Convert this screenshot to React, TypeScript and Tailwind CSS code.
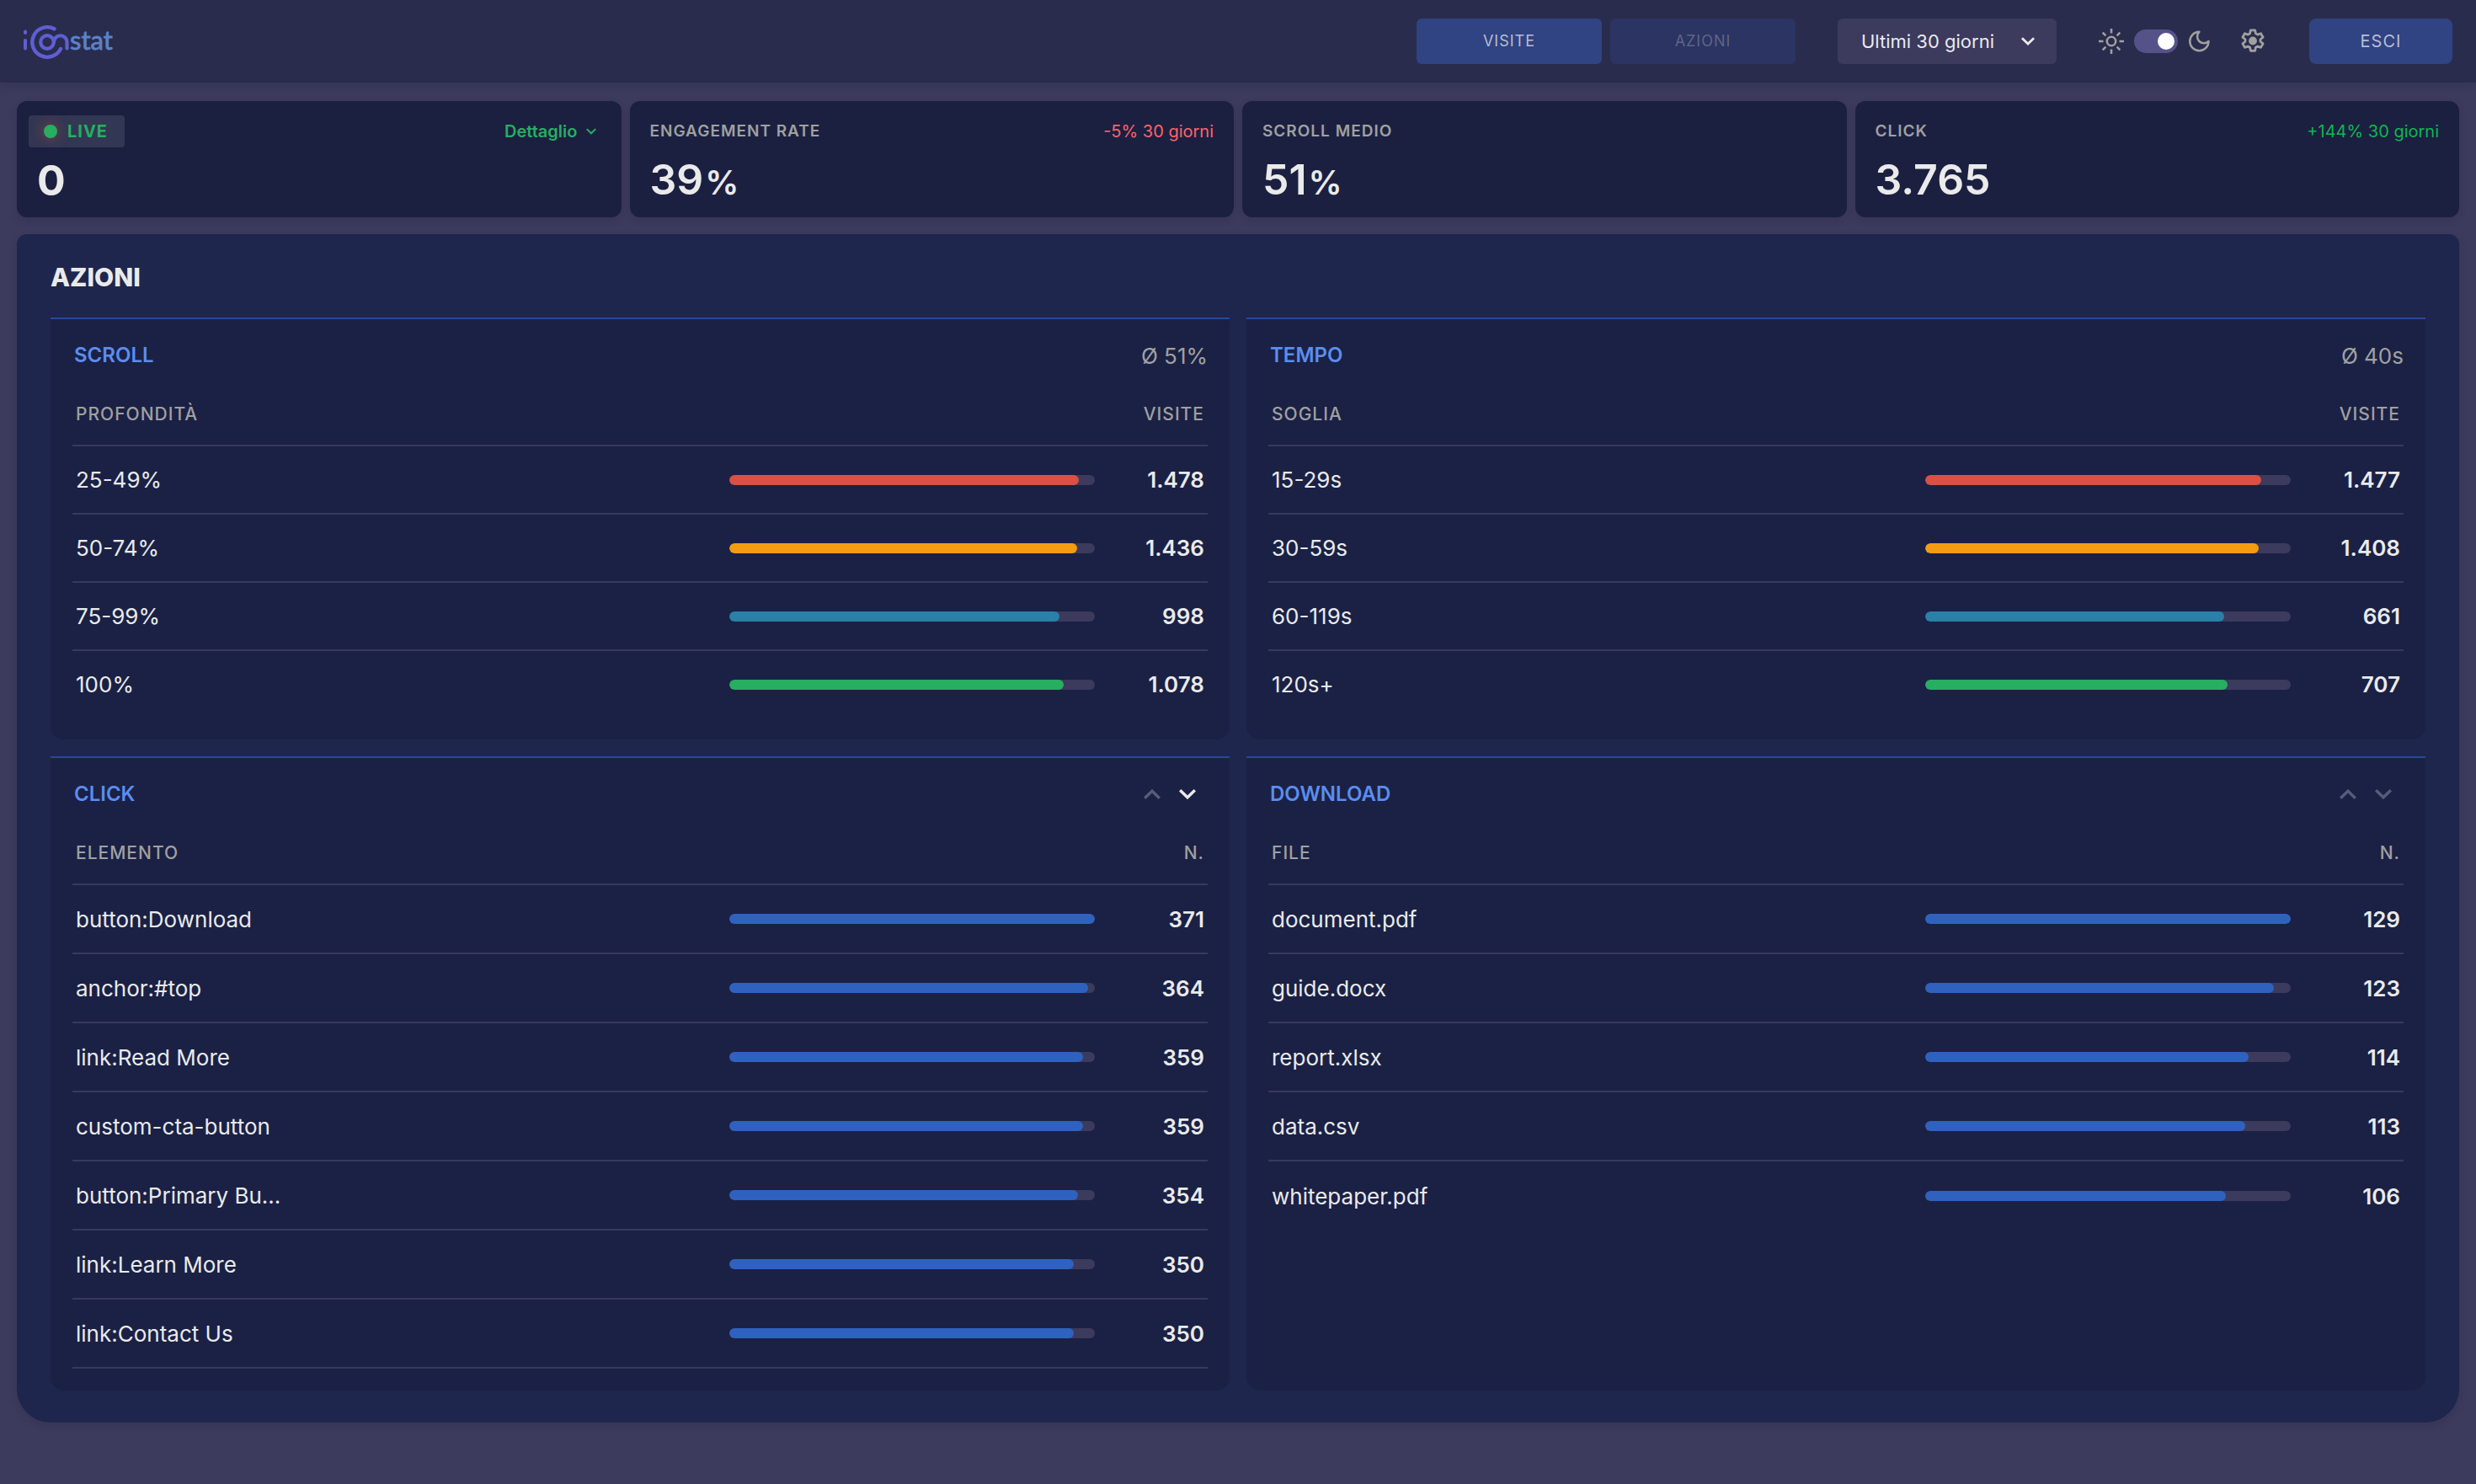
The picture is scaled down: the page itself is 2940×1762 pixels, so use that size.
import React from 'react';

type Row = {
  label: string;
  value: string;
  width: number;
  color: string;
};

const kpis = [
  { label: 'ENGAGEMENT RATE', value: '39', unit: '%', trend: '-5% 30 giorni', trendColor: 'text-[#ff6369]' },
  { label: 'SCROLL MEDIO', value: '51', unit: '%', trend: '', trendColor: '' },
  { label: 'CLICK', value: '3.765', unit: '', trend: '+144% 30 giorni', trendColor: 'text-[#12b550]' },
];

const scrollRows: Row[] = [
  { label: '25-49%', value: '1.478', width: 95.6, color: 'bg-[#db4f45]' },
  { label: '50-74%', value: '1.436', width: 95.2, color: 'bg-[#f39c12]' },
  { label: '75-99%', value: '998', width: 90.4, color: 'bg-[#2980a9]' },
  { label: '100%', value: '1.078', width: 91.5, color: 'bg-[#27ae60]' },
];

const timeRows: Row[] = [
  { label: '15-29s', value: '1.477', width: 92, color: 'bg-[#db4f45]' },
  { label: '30-59s', value: '1.408', width: 91.2, color: 'bg-[#f39c12]' },
  { label: '60-119s', value: '661', width: 81.8, color: 'bg-[#2980a9]' },
  { label: '120s+', value: '707', width: 82.7, color: 'bg-[#27ae60]' },
];

const toRows = (items: [string, number][]): Row[] =>
  items.map(([label, count]) => ({
    label,
    value: String(count),
    width: (count / items[0][1]) * 100,
    color: 'bg-[#2f62bf]',
  }));

const clickRows = toRows([
  ['button:Download', 371],
  ['anchor:#top', 364],
  ['link:Read More', 359],
  ['custom-cta-button', 359],
  ['button:Primary Bu...', 354],
  ['link:Learn More', 350],
  ['link:Contact Us', 350],
]);

const downloadRows = toRows([
  ['document.pdf', 129],
  ['guide.docx', 123],
  ['report.xlsx', 114],
  ['data.csv', 113],
  ['whitepaper.pdf', 106],
]);

const Chevron = ({ up = false, className = '' }: { up?: boolean; className?: string }) => (
  <svg viewBox="0 0 20 12" className={className} fill="none" stroke="currentColor" strokeWidth="3.4" aria-hidden="true">
    <path d={up ? 'M1.2 10.8 10 2.2l8.8 8.6' : 'M1.2 1.2 10 9.8l8.8-8.6'} />
  </svg>
);

const Logo = () => (
  <svg viewBox="0 0 108 44" className="h-11 w-27" fill="none" strokeLinecap="round" role="img" aria-label="iConstat">
    <g stroke="#5f5fd3">
      <path d="M2 10.5v1.6M2 21v9.500" strokeWidth="4" />
      <path d="M36.500 7.300A17.800 17.800 0 1 0 44 31" strokeWidth="4.400" />
      <circle cx="28" cy="23" r="7.800" strokeWidth="4.200" />
      <path d="M36 23a7.750 7.750 0 0 1 15.500 0v7.500" strokeWidth="4.200" />
    </g>
    <text
      x="55"
      y="31.500"
      fill="#5a82c8"
      stroke="#5a82c8"
      strokeWidth="0.8"
      fontFamily="Lato, sans-serif"
      fontSize="31"
    >
      stat
    </text>
  </svg>
);

const Sun = () => (
  <svg viewBox="0 0 30 30" className="size-[30px]" fill="none" stroke="currentColor" strokeWidth="2.600" aria-hidden="true">
    <circle cx="15" cy="15" r="5.200" />
    <path d="M15 0v5.500M15 24.500V30M0 15h5.500M24.500 15H30M4.700 4.700l3.700 3.700M21.600 21.600l3.700 3.700M4.700 25.300l3.700-3.700M21.600 8.400l3.700-3.700" />
  </svg>
);

const Moon = () => (
  <svg viewBox="1.200 1.500 21 21" className="size-[26px]" fill="none" stroke="currentColor" strokeWidth="2" strokeLinejoin="round" aria-hidden="true">
    <path d="M12 3a6 6 0 0 0 9 9 9 9 0 1 1-9-9Z" />
  </svg>
);

const Gear = () => (
  <svg viewBox="0 0 30 30" className="size-[30px]" fill="none" stroke="currentColor" strokeWidth="2.800" strokeLinejoin="round" aria-hidden="true">
    <path d="M12.400 1.800h5.200l.8 4 2.300 1.300 3.800-1.400 2.600 4.500-3.100 2.600v2.500l3.100 2.600-2.600 4.500-3.800-1.400-2.300 1.300-.8 4h-5.200l-.8-4-2.300-1.300-3.800 1.400-2.600-4.500 3.100-2.600v-2.500l-3.100-2.600 2.600-4.500 3.800 1.400 2.300-1.300Z" />
    <circle cx="15" cy="14.500" r="3.500" fill="currentColor" />
  </svg>
);

const Header = () => (
  <header className="flex h-[98px] items-center justify-between bg-[#2a2c4d] px-7 shadow-[0_4px_12px_rgba(0,0,0,0.08)]">
    <a href="#" className="block">
      <Logo />
    </a>
    <div className="flex items-center">
      <nav className="flex gap-2.5">
        <button className="h-[54px] w-[220px] rounded-md bg-[#304382] text-lg tracking-[1px] text-[#b9bdd3]">
          VISITE
        </button>
        <button className="h-[54px] w-[220px] rounded-md bg-[#2b3462] text-lg tracking-[1px] text-[#5f6487]" disabled>
          AZIONI
        </button>
      </nav>
      <div className="relative ml-[50px]">
        <select
          aria-label="Periodo"
          className="h-[54px] w-[260px] appearance-none rounded-md bg-[#3c3a5d] pl-7 text-[22px] text-[#eaeaea]"
        >
          <option>Ultimi 30 giorni</option>
        </select>
        <Chevron className="pointer-events-none absolute top-[22px] right-[26px] h-2.5 w-4 text-[#eaeaea]" />
      </div>
      <div className="ml-[50px] flex items-center gap-3 text-[#a0a0a0]">
        <Sun />
        <label className="relative block h-7 w-[52px]">
          <input
            type="checkbox"
            aria-label="Tema scuro"
            defaultChecked
            className="peer block h-7 w-[52px] appearance-none rounded-full bg-[#55528a]"
          />
          <span className="absolute top-1 left-1 size-5 rounded-full bg-white peer-checked:left-7" />
        </label>
        <Moon />
      </div>
      <button aria-label="Impostazioni" className="ml-9 text-[#a0a0a0]">
        <Gear />
      </button>
      <button className="ml-[52px] h-[54px] w-[170px] rounded-lg bg-[#304382] text-xl tracking-[1px] text-[#b9bdd3]">
        ESCI
      </button>
    </div>
  </header>
);

const LiveCard = () => (
  <section className="h-[138px] rounded-xl bg-[#1b2041] pt-[17px] pr-6 pl-3.5 shadow-[0_4px_12px_rgba(0,0,0,0.08)]">
    <div className="flex h-[38px] items-center justify-between">
      <div className="flex h-full w-[114px] items-center gap-3 rounded-sm bg-[#323753] pl-[18px]">
        <span className="size-4 rounded-full bg-[#27ae60] shadow-[0_0_16px_rgba(231,76,60,0.5)]" />
        <span className="text-xl font-bold tracking-[1px] text-[#27ae60]">LIVE</span>
      </div>
      <button className="flex items-center gap-2.5 text-xl font-semibold text-[#27ae60]">
        Dettaglio
        <Chevron className="mr-1.5 h-2 w-3" />
      </button>
    </div>
    <p className="pl-2.5 text-[50px] leading-[78px] font-bold text-[#eaeaea]">0</p>
  </section>
);

const Trend = ({ title, aside, children }: { title: string; aside: React.ReactNode; children: React.ReactNode }) => (
  <section className="rounded-b-2xl border-t-2 border-[#2b479b] bg-[#1a2145] p-[26px]">
    <div className="mb-4 flex h-[34px] items-center justify-between pl-0.5">
      <h3 className="text-2xl font-semibold text-[#5b8def]">{title}</h3>
      {aside}
    </div>
    {children}
  </section>
);

const Pager = ({ more = false }: { more?: boolean }) => (
  <div className="flex pr-[3px]">
    <button aria-label="Precedenti" className="flex h-8 w-[42px] items-center justify-center text-[#575c79]" disabled>
      <Chevron up className="h-3 w-5" />
    </button>
    <button
      aria-label="Successivi"
      className={`flex h-8 w-[42px] items-center justify-center ${more ? 'text-[#eaeaea]' : 'text-[#575c79]'}`}
      disabled={!more}
    >
      <Chevron className="h-3 w-5" />
    </button>
  </div>
);

type BarTableProps = {
  head: string;
  count: string;
  rows: Row[];
  rowHeight?: string;
  lastLine?: boolean;
};

const BarTable = ({ head, count, rows, rowHeight = 'h-[82px]', lastLine = false }: BarTableProps) => (
  <table className="w-full table-fixed border-separate border-spacing-0">
    <thead className="text-[21px] tracking-[1px] text-[#a0a0a0]">
      <tr className="h-[75px]">
        <th className="border-b-2 border-[#38395c] p-0 px-1 text-left font-medium">{head}</th>
        <th className="w-[442px] border-b-2 border-[#38395c] p-0" />
        <th className="w-[130px] border-b-2 border-[#38395c] p-0 pr-1 text-right font-medium">{count}</th>
      </tr>
    </thead>
    <tbody className="text-[26px] text-[#eaeaea]">
      {rows.map((row, i) => {
        const line = lastLine || i < rows.length - 1 ? 'border-b-2 border-[#38395c]' : '';
        return (
          <tr key={row.label} className={rowHeight}>
            <td className={`p-0 px-1 ${line}`}>{row.label}</td>
            <td className={`p-0 px-1 ${line}`}>
              <div className="h-3 overflow-hidden rounded-full bg-[#3c3a5d]">
                <div className={`h-full rounded-full ${row.color}`} style={{ width: `${row.width}%` }} />
              </div>
            </td>
            <td className={`p-0 pr-1 text-right font-semibold ${line}`}>{row.value}</td>
          </tr>
        );
      })}
    </tbody>
  </table>
);

const App = () => {
  return (
    <div className="min-h-screen bg-[#3c3a5d] font-[Inter,sans-serif]">
      <Header />
      <main className="px-5 pt-[22px] pb-5">
        <div className="grid grid-cols-4 gap-2.5">
          <LiveCard />
          {kpis.map((kpi) => (
            <section
              key={kpi.label}
              className="h-[138px] rounded-xl bg-[#1b2041] px-6 pt-[17px] shadow-[0_4px_12px_rgba(0,0,0,0.08)]"
            >
              <div className="flex h-[38px] items-center justify-between">
                <h2 className="text-[19px] font-semibold tracking-[1px] text-[#a0a0a0]">{kpi.label}</h2>
                <span className={`text-xl ${kpi.trendColor}`}>{kpi.trend}</span>
              </div>
              <p className="text-[50px] leading-[76px] font-semibold text-[#eaeaea]">
                {kpi.value}
                {kpi.unit && <span className="ml-0.5 text-[40px]">{kpi.unit}</span>}
              </p>
            </section>
          ))}
        </div>

        <div className="mt-5 rounded-t-xl rounded-b-[40px] bg-[#1e264d] px-10 pt-8 pb-[38px] shadow-[0_4px_12px_rgba(0,0,0,0.08)]">
          <h1 className="text-3xl leading-[38px] font-extrabold text-[#eaeaea]">AZIONI</h1>
          <div className="mt-[29px] grid grid-cols-2 gap-5">
            <Trend title="SCROLL" aside={<span className="text-[26px] text-[#a0a0a0]">Ø 51%</span>}>
              <BarTable head="PROFONDITÀ" count="VISITE" rows={scrollRows} rowHeight="h-[81px] last:h-[79px]" />
            </Trend>
            <Trend title="TEMPO" aside={<span className="text-[26px] text-[#a0a0a0]">Ø 40s</span>}>
              <BarTable head="SOGLIA" count="VISITE" rows={timeRows} rowHeight="h-[81px] last:h-[79px]" />
            </Trend>
            <Trend title="CLICK" aside={<Pager more />}>
              <BarTable head="ELEMENTO" count="N." rows={clickRows} lastLine />
            </Trend>
            <Trend title="DOWNLOAD" aside={<Pager />}>
              <BarTable head="FILE" count="N." rows={downloadRows} />
            </Trend>
          </div>
        </div>
      </main>
    </div>
  );
};

export default App;
